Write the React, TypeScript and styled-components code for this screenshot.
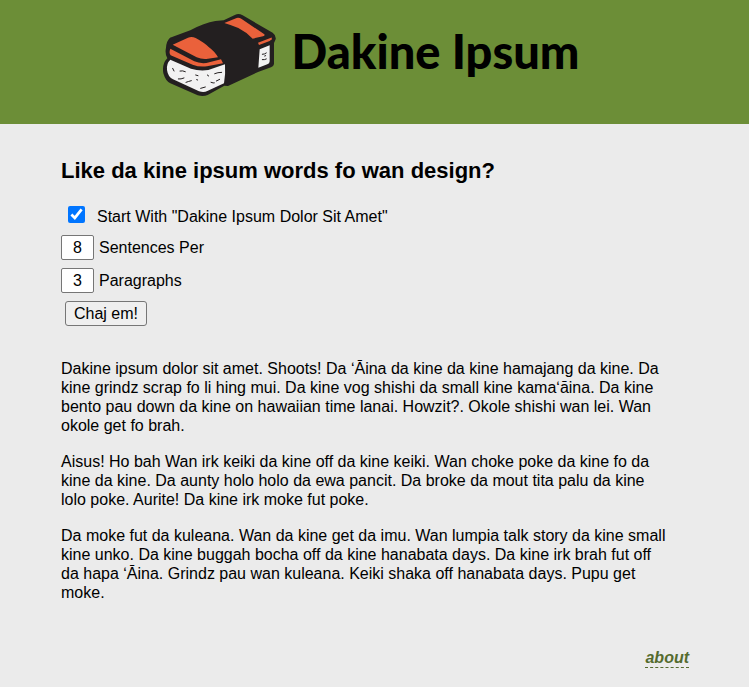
import React, { useState } from "react";
import styled, { createGlobalStyle } from "styled-components";

const GlobalStyle = createGlobalStyle`
  *, *::before, *::after { box-sizing: border-box; }
  body {
    margin: 0;
    background: #ebebeb;
    color: #000;
    font-family: "Liberation Sans", Arial, sans-serif;
    font-size: 16px;
    line-height: 19px;
  }
`;

const Header = styled.header`
  display: flex;
  justify-content: center;
  align-items: flex-start;
  gap: 6px;
  min-height: 124px;
  padding: 5px 14px 0 0;
  background: #6c8e37;
`;

const Logo = styled.svg`
  flex: none;
  width: 130px;
  height: 100px;
`;

const SiteTitle = styled.h1`
  margin: 16px 0 0;
  font-family: Lato, "Open Sans", sans-serif;
  font-size: 47px;
  font-weight: 900;
  line-height: 60px;
  white-space: nowrap;
`;

const Main = styled.main`
  padding: 34px 60px 0 61px;
`;

const Heading = styled.h2`
  margin: 0 0 22px;
  font-size: 22px;
  line-height: 26px;
`;

const Form = styled.form`
  display: flex;
  flex-direction: column;
  align-items: flex-start;
  gap: 8px;
`;

const Row = styled.div`
  display: flex;
  align-items: center;
  gap: 5px;
  min-height: 25px;
`;

const CheckRow = styled(Row)`
  gap: 12px;
  min-height: 21px;
  padding-left: 7px;
`;

const Checkbox = styled.input`
  width: 17px;
  height: 17px;
  margin: 0 0 4px;
  accent-color: #0075ff;
`;

const CountInput = styled.input`
  width: 33px;
  height: 25px;
  padding: 0;
  border: 1px solid #767676;
  border-radius: 2px;
  background: #fff;
  color: #000;
  font: inherit;
  text-align: center;
`;

const SubmitButton = styled.button`
  height: 25px;
  margin-left: 4px;
  padding: 0 8px;
  border: 1px solid #767676;
  border-radius: 3px;
  background: #efefef;
  color: #000;
  font: inherit;
`;

const Output = styled.section`
  display: flex;
  flex-direction: column;
  gap: 17px;
  margin-top: 33px;
  padding-right: 20px;
`;

const Paragraph = styled.p`
  margin: 0;
`;

const Footer = styled.footer`
  display: flex;
  justify-content: flex-end;
  padding: 47px 60px 16px;
`;

const AboutLink = styled.a`
  border-bottom: 1px dashed #556b2f;
  color: #556b2f;
  font-style: italic;
  font-weight: bold;
  line-height: 18px;
  text-decoration: none;
`;

const paragraphs = [
  "Dakine ipsum dolor sit amet. Shoots! Da ʻĀina da kine da kine hamajang da kine. Da kine grindz scrap fo li hing mui. Da kine vog shishi da small kine kamaʻāina. Da kine bento pau down da kine on hawaiian time lanai. Howzit?. Okole shishi wan lei. Wan okole get fo brah.",
  "Aisus! Ho bah Wan irk keiki da kine off da kine keiki. Wan choke poke da kine fo da kine da kine. Da aunty holo holo da ewa pancit. Da broke da mout tita palu da kine lolo poke. Aurite! Da kine irk moke fut poke.",
  "Da moke fut da kuleana. Wan da kine get da imu. Wan lumpia talk story da kine small kine unko. Da kine buggah bocha off da kine hanabata days. Da kine irk brah fut off da hapa ʻĀina. Grindz pau wan kuleana. Keiki shaka off hanabata days. Pupu get moke.",
];

function MusubiLogo() {
  return (
    <Logo viewBox="0 0 390 300" aria-hidden="true">
      <path
        fill="#231f20"
        d="M42 98 L103 76 Q145 53 178 48 L203 46 L238 29 Q248 24 260 31 L350 83 Q361 91 359 103 L354 114 V177 Q353 184 345 187 L308 200 L216 243 L205 242 L155 270 Q142 276 125 271 L43 235 Q29 229 22 205 Q17 177 34 160 Q26 146 30 128 Q31 108 42 98Z"
      />
      <path fill="#ea613b" d="M50 119 L96 98 Q107 93 119 99 Q145 113 158 126 Q177 140 186 157 L151 162 Q136 163 122 157Z" />
      <path fill="#ea613b" d="M43 131 L115 169 Q130 176 151 174 L195 163 L201 175 L153 184 Q130 187 110 179 L44 151 Q38 143 43 131Z" />
      <path fill="#ea613b" d="M205 54 L242 39 Q249 37 257 42 L325 88 Q328 92 321 94 L290 101 Q271 81 247 69 Q225 60 205 54Z" />
      <path fill="#ea613b" d="M306 113 L345 98 Q349 97 347 103 L341 108 L309 120Z" />
      <path fill="#f2f2f2" d="M43 164 L105 191 Q130 199 157 195 L207 178 Q209 205 204 235 L154 258 Q144 264 129 259 L51 223 Q36 216 33 195 Q31 175 43 164Z" />
      <path fill="#f2f2f2" d="M311 133 L341 121 V169 Q341 176 334 178 L307 188Z" />
      <g fill="none" stroke="#231f20" strokeWidth="3" strokeLinecap="round">
        <path d="M50 190l4 8M72 198q8-2 16 2M67 222q8 1 17-3M119 210l7 2M122 224l3 1M154 210l4 3M176 206q9-4 21-4M90 232q8-3 16-5M134 250l14-4M165 232q8 3 10 2M181 228l10-5M319 148q7 0 12-4M319 164q7 1 12-2M326 153l3-1" />
      </g>
    </Logo>
  );
}

export default function App() {
  const [startWith, setStartWith] = useState(true);
  const [sentences, setSentences] = useState("8");
  const [count, setCount] = useState("3");

  return (
    <>
      <GlobalStyle />
      <Header>
        <MusubiLogo />
        <SiteTitle>Dakine Ipsum</SiteTitle>
      </Header>
      <Main>
        <Heading>Like da kine ipsum words fo wan design?</Heading>
        <Form onSubmit={(event) => event.preventDefault()}>
          <CheckRow>
            <Checkbox id="start" type="checkbox" checked={startWith} onChange={(e) => setStartWith(e.target.checked)} />
            <label htmlFor="start">Start With "Dakine Ipsum Dolor Sit Amet"</label>
          </CheckRow>
          <Row>
            <CountInput id="sentences" type="text" inputMode="numeric" value={sentences} onChange={(e) => setSentences(e.target.value)} />
            <label htmlFor="sentences">Sentences Per</label>
          </Row>
          <Row>
            <CountInput id="paragraphs" type="text" inputMode="numeric" value={count} onChange={(e) => setCount(e.target.value)} />
            <label htmlFor="paragraphs">Paragraphs</label>
          </Row>
          <SubmitButton type="submit">Chaj em!</SubmitButton>
        </Form>
        <Output>
          {paragraphs.map((text) => (
            <Paragraph key={text}>{text}</Paragraph>
          ))}
        </Output>
      </Main>
      <Footer>
        <AboutLink href="#about">about</AboutLink>
      </Footer>
    </>
  );
}
